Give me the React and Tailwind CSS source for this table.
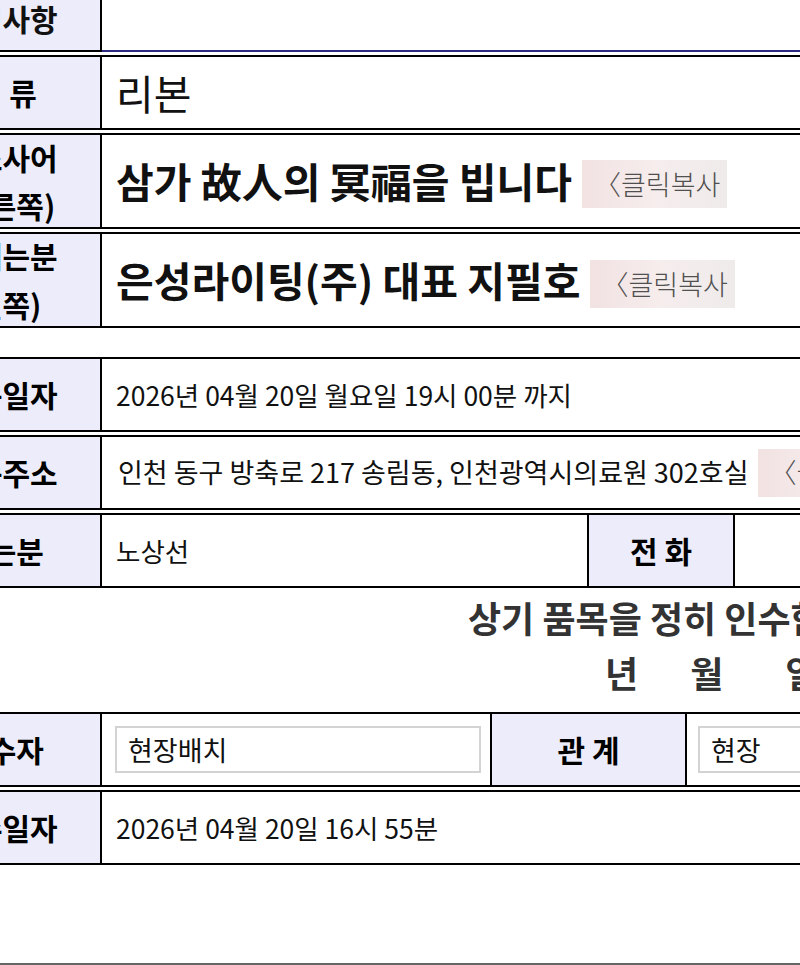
import React from "react";

function Label({ children, className = "" }) {
  return (
    <div
      className={`flex flex-col items-center justify-center bg-[#ececfb] border-r-2 border-black font-bold text-[30px] text-black whitespace-nowrap ${className}`}
    >
      {children}
    </div>
  );
}

function CopyBadge({ className = "" }) {
  return (
    <div
      className={`flex items-center shrink-0 w-[145px] h-[48px] pl-[12px] overflow-hidden bg-gradient-to-r from-[#f2e2e2] via-[#f6eded] to-[#efebeb] text-[#505050] text-[27px] font-light whitespace-nowrap ${className}`}
    >
      〈클릭복사
    </div>
  );
}

function Row({ children, className = "" }) {
  return (
    <div className={`flex border-y-2 border-black h-[75px] ${className}`}>
      {children}
    </div>
  );
}

export default function App() {
  return (
    <div className="w-[800px] h-[965px] overflow-hidden bg-white border-b-2 border-[#666] font-['Noto_Sans_CJK_KR','Noto_Sans',sans-serif] text-[#111]">
      <div className="-ml-[95px] w-[1060px]">
        {/* 요청사항 */}
        <div className="flex h-[52px]">
          <div className="w-[197px] bg-[#ececfb] border-r-2 border-b-2 border-black flex justify-center pt-[1px] font-bold text-[30px] leading-[34px]">
            요청사항
          </div>
          <div className="flex-1 border-b-2 border-[#2b2b84]"></div>
        </div>

        <Row className="mt-[3px]">
          <Label className="w-[197px]">종&nbsp;&nbsp;류</Label>
          <div className="flex-1 flex items-center pl-[14px] text-[41px]">리본</div>
        </Row>

        <Row className="mt-[3px] h-[96px]">
          <Label className="w-[197px] leading-[48px]">
            <span>경조사어</span>
            <span>(오른쪽)</span>
          </Label>
          <div className="flex-1 flex items-center pl-[14px] gap-[10px] whitespace-nowrap">
            <span className="font-bold text-[41px]">삼가 故人의 冥福을 빕니다</span>
            <CopyBadge className="mt-[6px]" />
          </div>
        </Row>

        <Row className="mt-[3px] h-[96px]">
          <Label className="w-[197px] leading-[49px]">
            <span>보내는분</span>
            <span>(왼쪽)</span>
          </Label>
          <div className="flex-1 flex items-center pl-[14px] gap-[9px] whitespace-nowrap">
            <span className="font-bold text-[41px]">은성라이팅(주) 대표 지필호</span>
            <CopyBadge className="mt-[8px]" />
          </div>
        </Row>

        <Row className="mt-[29px]">
          <Label className="w-[197px]">배송일자</Label>
          <div className="flex-1 flex items-center pl-[14px] text-[26.5px] whitespace-nowrap">
            2026년 04월 20일 월요일 19시 00분 까지
          </div>
        </Row>

        <Row className="mt-[3px]">
          <Label className="w-[197px]">배송주소</Label>
          <div className="flex-1 flex items-center pl-[16px] gap-[9px] text-[27px] whitespace-nowrap">
            <span>인천 동구 방축로 217 송림동, 인천광역시의료원 302호실</span>
            <CopyBadge />
          </div>
        </Row>

        <Row className="mt-[3px]">
          <Label className="w-[197px]">받는분</Label>
          <div className="w-[487px] flex items-center pl-[14px] text-[26.5px] border-r-2 border-black">
            노상선
          </div>
          <Label className="w-[146px]">전 화</Label>
          <div className="flex-1"></div>
        </Row>

        <div className="h-[124px] pt-[6px] flex flex-col gap-[9px] font-bold text-[36px] leading-[46px] text-[#333]">
          <div className="pl-[563px] whitespace-nowrap">상기 품목을 정히 인수함</div>
          <div className="pl-[700px] flex">
            <span>년</span>
            <span className="ml-[52px]">월</span>
            <span className="ml-[62px]">일</span>
          </div>
        </div>

        <Row>
          <Label className="w-[197px]">인수자</Label>
          <div className="w-[390px] flex items-center pl-[13px] border-r-2 border-black">
            <input
              readOnly
              defaultValue="현장배치"
              className="w-[366px] h-[47px] border-2 border-[#d3d3d3] px-[11px] text-[27px] text-[#111] outline-none"
            />
          </div>
          <Label className="w-[195px]">관 계</Label>
          <div className="flex-1 flex items-center pl-[11px]">
            <input
              readOnly
              defaultValue="현장"
              className="w-[200px] h-[47px] border-2 border-[#d3d3d3] px-[11px] text-[27px] text-[#111] outline-none"
            />
          </div>
        </Row>

        <Row className="mt-[3px]">
          <Label className="w-[197px]">인수일자</Label>
          <div className="flex-1 flex items-center pl-[14px] text-[26.5px] whitespace-nowrap">
            2026년 04월 20일 16시 55분
          </div>
        </Row>
      </div>
    </div>
  );
}
